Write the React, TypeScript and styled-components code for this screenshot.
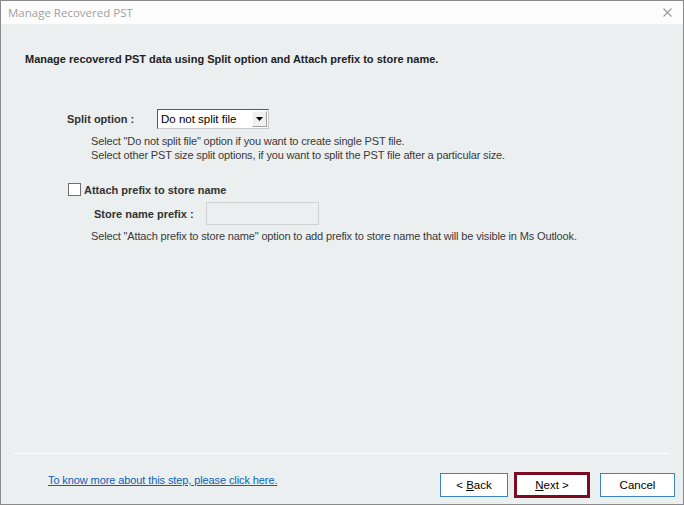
import * as React from 'react';
import styled, { createGlobalStyle } from 'styled-components';

const Global = createGlobalStyle`
    html, body {
        margin: 0;
        padding: 0;
        background: #ffffff;
    }
    * {
        box-sizing: border-box;
    }
`;

const Window = styled.div`
    width: 684px;
    height: 505px;
    border: 1px solid #8a8a8a;
    display: flex;
    flex-direction: column;
    background: #ebeff0;
    font-family: "Liberation Sans", Arial, sans-serif;
    font-size: 11px;
    color: #1a1a1a;
`;

const TitleBar = styled.div`
    height: 23px;
    flex: none;
    display: flex;
    align-items: center;
    justify-content: space-between;
    padding: 0 11px 0 7px;
    background: #fdfdfd;
    font-family: "Open Sans", "Noto Sans", sans-serif;
    font-size: 11.5px;
    color: #a0a0a0;
`;

const Body = styled.div`
    flex: 1;
    display: flex;
    flex-direction: column;
    padding: 29px 0 0 24px;
`;

const Heading = styled.div`
    font-weight: bold;
    line-height: 13px;
    color: #222;
`;

const Section = styled.div<{ indent: number }>`
    margin-left: ${(p) => p.indent}px;
    display: flex;
    flex-direction: column;
`;

const Row = styled.div`
    display: flex;
    align-items: center;
`;

const Label = styled.div<{ width?: number }>`
    width: ${(p) => (p.width ? `${p.width}px` : 'auto')};
    font-weight: bold;
    color: #333;
`;

const SelectBox = styled.div`
    width: 112px;
    height: 20px;
    display: flex;
    align-items: stretch;
    background: #ffffff;
    border: 1px solid #5a5a5a;
    border-right-color: #c8c8c8;
    border-bottom-color: #c8c8c8;
    padding: 1px;
`;

const SelectText = styled.div`
    flex: 1;
    padding-left: 2px;
    line-height: 16px;
    font-size: 11.5px;
    color: #000;
`;

const SelectArrow = styled.div`
    width: 15px;
    background: #f0f0f0;
    border: 1px solid #a0a0a0;
    border-top-color: #fafafa;
    border-left-color: #fafafa;
    display: flex;
    align-items: center;
    justify-content: center;
`;

const Help = styled.div`
    margin-left: 24px;
    line-height: 14px;
    color: #3a3a3a;
    letter-spacing: -0.15px;
`;

const CheckBox = styled.span`
    width: 13px;
    height: 13px;
    border: 1px solid #6f6f6f;
    background: #ffffff;
    margin: 0 3px 0 1px;
`;

const TextInput = styled.div`
    width: 113px;
    height: 23px;
    background: #ebeff0;
    border: 1px solid #cfd3d4;
`;

const Spacer = styled.div`
    flex: 1;
`;

const Separator = styled.div`
    height: 1px;
    margin: 0 13px 0 13px;
    background: #ffffff;
`;

const Footer = styled.div`
    display: flex;
    align-items: center;
    padding: 18px 8px 6px 47px;
`;

const HelpLink = styled.a`
    color: #0b5fb8;
    text-decoration: underline;
    letter-spacing: -0.1px;
    margin-top: -11px;
    cursor: pointer;
`;

const Button = styled.button<{ w: number; focused?: boolean }>`
    width: ${(p) => p.w}px;
    height: ${(p) => (p.focused ? 26 : 24)}px;
    margin-left: ${(p) => (p.focused ? 6 : 9)}px;
    background: #ffffff;
    border: ${(p) => (p.focused ? '3px solid #7b0a22' : '1px solid #3a84c4')};
    font-family: "Liberation Sans", Arial, sans-serif;
    font-size: 11.5px;
    color: #000;
    padding: 0;
    & u {
        text-decoration: underline;
    }
`;

const App: React.FunctionComponent = () => (
    <>
        <Global />
        <Window>
            <TitleBar>
                <span>Manage Recovered PST</span>
                <svg width="9" height="9" viewBox="0 0 9 9">
                    <path d="M0.5 0.5 L8.5 8.5 M8.5 0.5 L0.5 8.5" stroke="#9a9a9a" strokeWidth="1.1" />
                </svg>
            </TitleBar>
            <Body>
                <Heading>Manage recovered PST data using Split option and Attach prefix to store name.</Heading>
                <Section indent={42} style={{ marginTop: 43 }}>
                    <Row>
                        <Label width={90}>Split option :</Label>
                        <SelectBox>
                            <SelectText>Do not split file</SelectText>
                            <SelectArrow>
                                <svg width="7" height="4" viewBox="0 0 7 4">
                                    <path d="M0 0 H7 L3.5 4 Z" fill="#000" />
                                </svg>
                            </SelectArrow>
                        </SelectBox>
                    </Row>
                    <Help style={{ marginTop: 5 }}>
                        Select "Do not split file" option if you want to create single PST file.
                        <br />
                        Select other PST size split options, if you want to split the PST file after a particular size.
                    </Help>
                    <Row style={{ marginTop: 21 }}>
                        <CheckBox />
                        <Label>Attach prefix to store name</Label>
                    </Row>
                    <Row style={{ marginTop: 6, marginLeft: 27 }}>
                        <Label width={112}>Store name prefix :</Label>
                        <TextInput />
                    </Row>
                    <Help style={{ marginTop: 4 }}>
                        Select "Attach prefix to store name" option to add prefix to store name that will be visible in Ms Outlook.
                    </Help>
                </Section>
                <Spacer />
            </Body>
            <Separator />
            <Footer>
                <HelpLink>To know more about this step, please click here.</HelpLink>
                <Spacer />
                <Button w={68}>
                    &lt; <u>B</u>ack
                </Button>
                <Button w={76} focused>
                    <u>N</u>ext &gt;
                </Button>
                <Button w={75} style={{ marginLeft: 10 }}>Cancel</Button>
            </Footer>
        </Window>
    </>
);

export default App;
